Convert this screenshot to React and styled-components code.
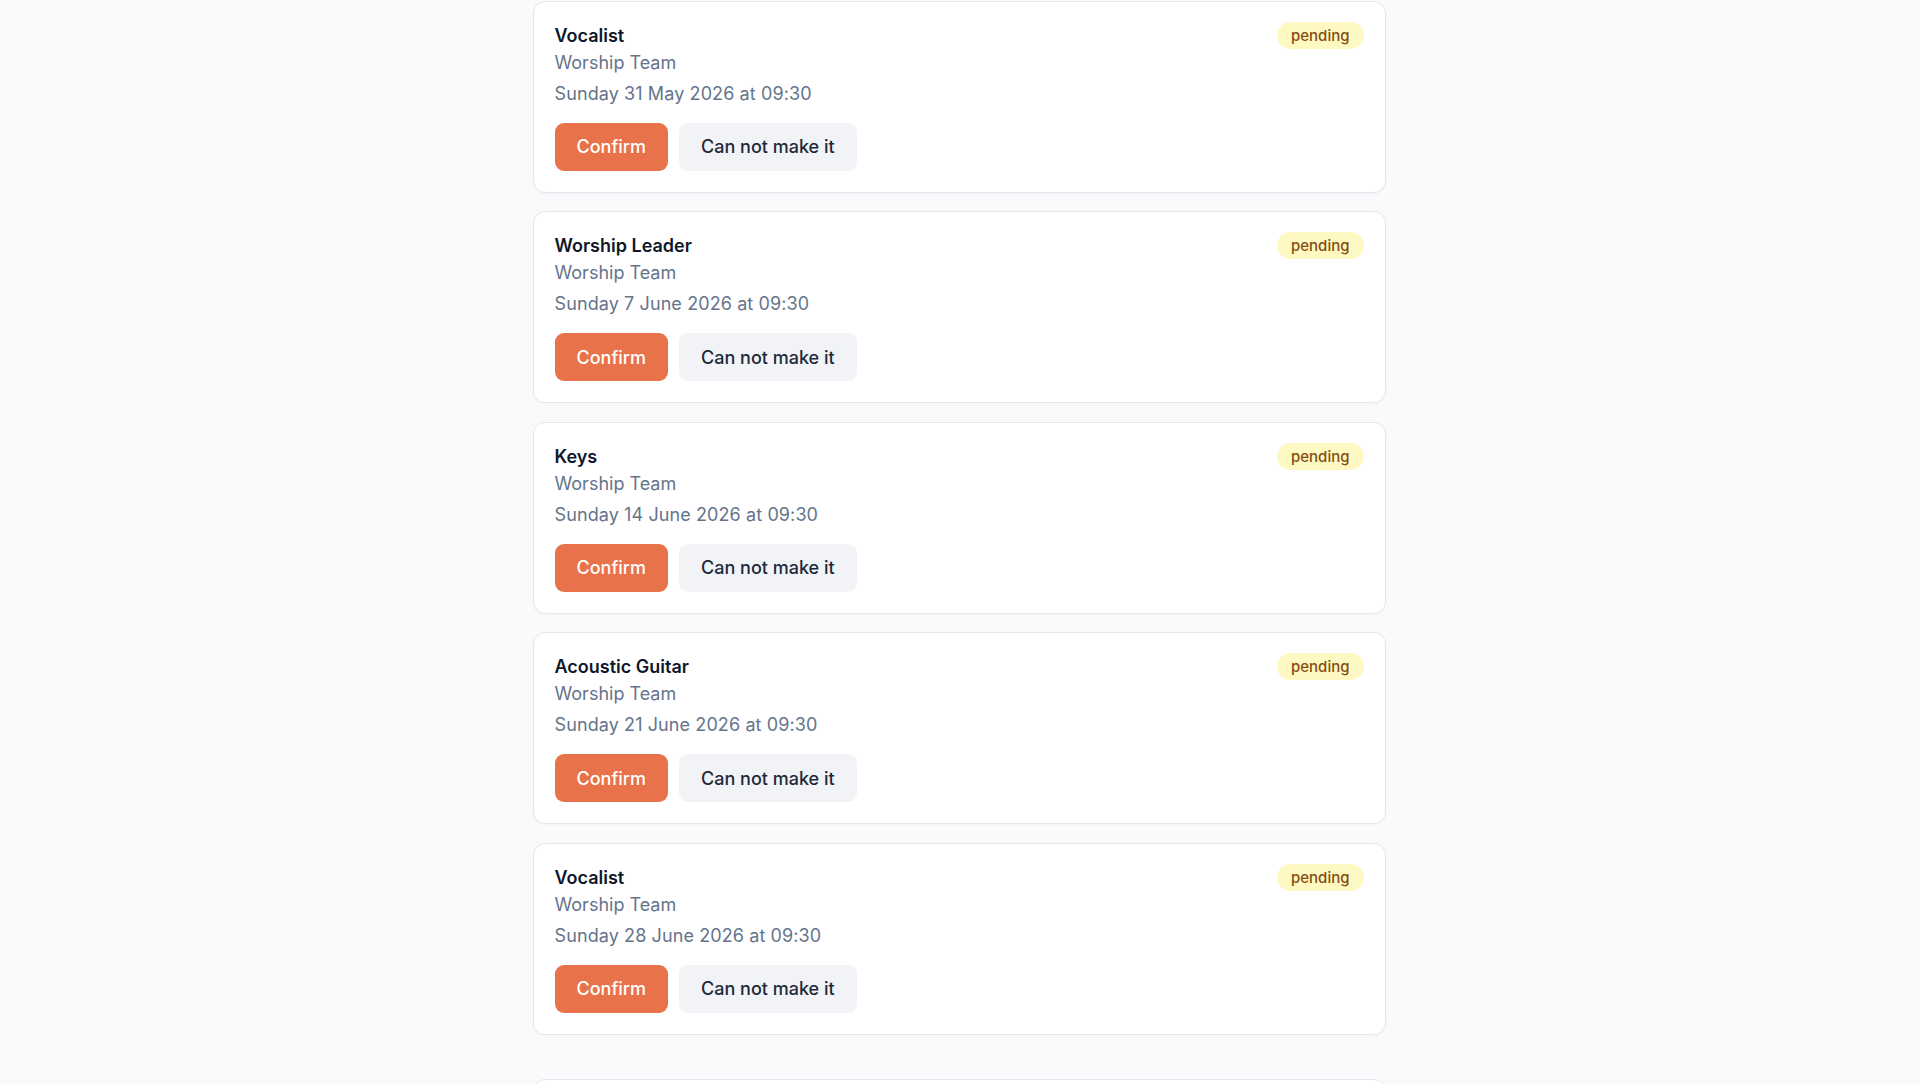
import React from 'react'
import styled, { createGlobalStyle } from 'styled-components'

const GlobalStyle = createGlobalStyle`
    html, body {
        margin: 0;
        padding: 0;
        background: #f8fafc;
        font-family: Inter, "Noto Sans", sans-serif;
        -webkit-font-smoothing: antialiased;
    }
`

const Page = styled.div`
    width: 853px;
    margin: 0 auto;
    padding: 0.5px 2px 0 0;
`

const Group = styled.ul`
    list-style: none;
    margin: 0 0 44.5px;
    padding: 0;
    display: flex;
    flex-direction: column;
    gap: 18.5px;
`

const Card = styled.li`
    background: #fff;
    border: 1px solid #e5e7eb;
    border-radius: 12px;
    padding: 20px 21px 21px;
    box-shadow: 0 1px 2px rgba(15, 23, 42, 0.03);
`

const Header = styled.div`
    display: flex;
    justify-content: space-between;
    align-items: flex-start;
`

const Role = styled.div`
    font-size: 18px;
    line-height: 27px;
    font-weight: 600;
    color: #0f172a;
`

const Team = styled.div`
    font-size: 18px;
    line-height: 27px;
    color: #64748b;
`

const When = styled(Team)`
    margin-top: 4px;
    letter-spacing: 0.1px;
`

const Badge = styled.span`
    display: inline-flex;
    align-items: center;
    height: 27px;
    padding: 0 14px;
    border-radius: 999px;
    background: #fef9c3;
    color: #854d0e;
    font-size: 15px;
    font-weight: 500;
`

const Actions = styled.div`
    display: flex;
    gap: 11px;
    margin-top: 16px;
`

const Button = styled.button`
    height: 48px;
    padding: 0 22px;
    border: none;
    border-radius: 9px;
    font-family: inherit;
    font-size: 18px;
    font-weight: 500;
    cursor: pointer;
    background: ${props => props.primary ? '#e8734a' : '#f1f3f6'};
    color: ${props => props.primary ? '#fff' : '#1e293b'};
`

const shifts = [
    { role: 'Vocalist', date: 'Sunday 31 May 2026 at 09:30' },
    { role: 'Worship Leader', date: 'Sunday 7 June 2026 at 09:30' },
    { role: 'Keys', date: 'Sunday 14 June 2026 at 09:30' },
    { role: 'Acoustic Guitar', date: 'Sunday 21 June 2026 at 09:30' },
    { role: 'Vocalist', date: 'Sunday 28 June 2026 at 09:30' }
]

const later = [
    { role: 'Vocalist', date: 'Sunday 5 July 2026 at 09:30' }
]

function Shift({ role, date }) {
    return (
        <Card>
            <Header>
                <div>
                    <Role>{role}</Role>
                    <Team>Worship Team</Team>
                </div>
                <Badge>pending</Badge>
            </Header>
            <When>{date}</When>
            <Actions>
                <Button primary>Confirm</Button>
                <Button>Can not make it</Button>
            </Actions>
        </Card>
    )
}

export default function App() {
    return (
        <Page>
            <GlobalStyle />
            <Group>
                {shifts.map((s, i) => <Shift key={i} {...s} />)}
            </Group>
            <Group>
                {later.map((s, i) => <Shift key={i} {...s} />)}
            </Group>
        </Page>
    )
}
